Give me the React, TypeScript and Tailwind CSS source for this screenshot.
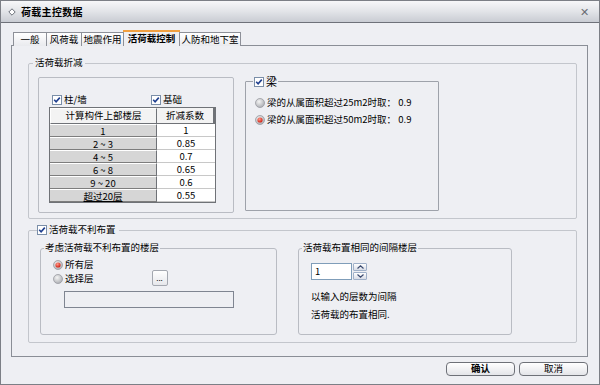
import React from "react";

const F = "font-['Noto_Sans_CJK_SC','Noto_Sans',sans-serif]";

function Check({ checked = true }: { checked?: boolean }) {
  return (
    <svg width="10" height="10" viewBox="0 0 10 10" className="shrink-0">
      <rect x="0.5" y="0.5" width="9" height="9" fill="#fff" stroke="#7a8ea8" />
      {checked && <path d="M2.2 4.8 L4.1 6.8 L7.8 2.6" fill="none" stroke="#1f3f8f" strokeWidth="1.6" />}
    </svg>
  );
}

function Radio({ checked = false }: { checked?: boolean }) {
  return (
    <svg width="10" height="10" viewBox="0 0 10 10" className="shrink-0">
      <defs>
        <radialGradient id="rg" cx="40%" cy="35%" r="70%">
          <stop offset="0%" stopColor="#f4f4f4" />
          <stop offset="100%" stopColor="#a9abb0" />
        </radialGradient>
        <radialGradient id="rr" cx="40%" cy="35%" r="60%">
          <stop offset="0%" stopColor="#ff9a8a" />
          <stop offset="100%" stopColor="#d42a1c" />
        </radialGradient>
      </defs>
      <circle cx="5" cy="5" r="4.5" fill="url(#rg)" stroke="#9a9ca2" strokeWidth="0.8" />
      {checked && <circle cx="5" cy="5" r="2.6" fill="url(#rr)" />}
    </svg>
  );
}

const rows: [string, string][] = [
  ["1", "1"],
  ["2 ~ 3", "0.85"],
  ["4 ~ 5", "0.7"],
  ["6 ~ 8", "0.65"],
  ["9 ~ 20", "0.6"],
  ["超过20层", "0.55"],
];

export default function App() {
  return (
    <div className={`${F} w-[600px] h-[385px] flex flex-col bg-[#eeeff3] border border-[#7c7f86] text-[9.5px] text-black overflow-hidden`}>
      {/* title bar */}
      <div className="h-[22px] shrink-0 flex items-center bg-gradient-to-b from-[#f7f7f9] via-[#e2e4e8] to-[#c9ccd3] border-b border-[#6e7179] pl-[7px] pr-[10px]">
        <svg width="8" height="8" viewBox="0 0 8 8" className="mr-[5px]">
          <path d="M4 0.8 L7.2 4 L4 7.2 L0.8 4 Z" fill="#fff" stroke="#6b6f78" strokeWidth="1" />
        </svg>
        <span className="font-bold text-[10px] leading-none tracking-[0.3px]">荷载主控数据</span>
        <span className="ml-auto text-[#6a6d74] text-[11px] leading-none">✕</span>
      </div>

      <div className="flex flex-col pl-[10px] pr-[11px] pt-[7px]">
        {/* tabs */}
        <div className="flex items-end h-[16px] pl-[2px] relative z-10">
          <div className="h-[14px] w-[34px] flex items-center justify-center border border-b-0 border-[#8d9098] bg-gradient-to-b from-[#ffffff] to-[#e9eaee] leading-none -mr-px">一般</div>
          <div className="h-[14px] w-[36px] flex items-center justify-center border border-b-0 border-[#8d9098] bg-gradient-to-b from-[#ffffff] to-[#e9eaee] leading-none -mr-px">风荷载</div>
          <div className="h-[14px] w-[43px] flex items-center justify-center border border-b-0 border-[#8d9098] bg-gradient-to-b from-[#ffffff] to-[#e9eaee] leading-none -mr-px">地震作用</div>
          <div className="h-[16px] w-[57px] flex flex-col border border-b-0 border-[#8d9098] bg-[#eeeff3] -mr-px">
            <div className="h-[2px] bg-[#f2a040] -mx-px -mt-px" />
            <div className="flex-1 flex items-center justify-center font-bold leading-none">活荷载控制</div>
          </div>
          <div className="h-[14px] w-[62px] flex items-center justify-center border border-b-0 border-[#8d9098] bg-gradient-to-b from-[#ffffff] to-[#e9eaee] leading-none">
            人防和地下室
          </div>
        </div>

        {/* panel */}
        <div className="h-[312px] -mt-px border border-[#8a8e96] bg-[#eeeff3] pl-[16px] pt-[17px] flex flex-col gap-[11px]">
          {/* group 1 */}
          <div className="relative w-[549px] h-[156px] border border-[#c3c6cc] rounded-[2px] flex items-start pl-[9px] pt-[13px]">
            <span className="absolute left-[4px] -top-[6px] px-[2px] bg-[#eeeff3] leading-none">活荷载折减</span>
            {/* inner table box */}
            <div className="w-[196px] h-[136px] border border-[#b9bcc3] rounded-[2px] flex flex-col pl-[10px] pt-[16px]">
              <div className="flex items-center h-[11px]">
                <div className="flex items-center gap-[2px] w-[102px] pl-[3px]">
                  <Check />
                  <span className="leading-none">柱/墙</span>
                </div>
                <div className="flex items-center gap-[2px]">
                  <Check />
                  <span className="leading-none">基础</span>
                </div>
              </div>
              <div className="mt-[2px] w-[167px] border border-[#6f7277] bg-white flex flex-col">
                <div className="flex h-[16px]">
                  <div className="w-[107px] flex items-center justify-center bg-[#f3f3f3] border-r border-b border-[#6f7277] border-t border-l border-t-white border-l-white leading-none">
                    计算构件上部楼层
                  </div>
                  <div className="flex-1 flex items-center justify-center bg-[#f3f3f3] border-b border-r-2 border-[#6f7277] leading-none">
                    折减系数
                  </div>
                </div>
                {rows.map(([a, b]) => (
                  <div key={a} className="flex h-[13px] overflow-hidden">
                    <div className="w-[107px] flex items-center justify-center bg-[#d6d6d6] border-t border-t-white border-b border-b-[#7d7d7d] border-r border-r-[#6f7277]">
                      <span className={`leading-[10px] whitespace-pre ${a === "超过20层" ? "underline" : ""}`}>{a}</span>
                    </div>
                    <div className="flex-1 flex items-center justify-center bg-white border-b border-[#c8c8c8]">
                      <span className="leading-[10px]">{b}</span>
                    </div>
                  </div>
                ))}
              </div>
            </div>
            {/* beam box */}
            <div className="relative ml-[11px] mt-[4px] w-[194px] h-[130px] border border-[#9ea2aa] rounded-[1px] flex flex-col pl-[9px] pt-[16px] gap-[7px]">
              <div className="absolute left-[7px] -top-[6px] px-[1px] bg-[#eeeff3] flex items-center gap-[2px]">
                <Check />
                <span className="leading-none text-[11px]">梁</span>
              </div>
              <div className="flex items-center gap-[2px] h-[10px]">
                <Radio />
                <span className="leading-none whitespace-pre">梁的从属面积超过25m2时取： 0.9</span>
              </div>
              <div className="flex items-center gap-[2px] h-[10px]">
                <Radio checked />
                <span className="leading-none whitespace-pre">梁的从属面积超过50m2时取： 0.9</span>
              </div>
            </div>
          </div>

          {/* group 2 */}
          <div className="relative w-[549px] h-[113px] border border-[#c3c6cc] rounded-[2px] flex items-start pl-[11px] pt-[17px]">
            <div className="absolute left-[8px] -top-[6px] pr-[3px] bg-[#eeeff3] flex items-center gap-[2px]">
              <Check />
              <span className="leading-none">活荷载不利布置</span>
            </div>
            <div className="relative w-[237px] h-[87px] border border-[#b9bcc3] rounded-[3px] flex flex-col pl-[12px] pt-[11px]">
              <span className="absolute left-[3px] -top-[6px] px-[1px] bg-[#eeeff3] leading-none">考虑活荷载不利布置的楼层</span>
              <div className="flex items-center gap-[2px] h-[10px]">
                <Radio checked />
                <span className="leading-none">所有层</span>
              </div>
              <div className="flex items-center h-[16px] mt-[1px]">
                <div className="flex items-center gap-[2px]">
                  <Radio />
                  <span className="leading-none">选择层</span>
                </div>
                <div className="ml-[58px] -mt-[3px] w-[16px] h-[16px] border border-[#a4a8b0] rounded-[2px] bg-gradient-to-b from-white to-[#e6e7eb] flex items-end justify-center pb-[3px] leading-none text-[8px]">
                  ...
                </div>
              </div>
              <div className="ml-[11px] mt-[4px] w-[170px] h-[17px] border border-[#7f8591] bg-[#eeeff3]" />
            </div>
            <div className="relative ml-[21px] w-[214px] h-[87px] border border-[#b9bcc3] rounded-[3px] flex flex-col pl-[12px] pt-[14px]">
              <span className="absolute left-[3px] -top-[6px] px-[1px] bg-[#eeeff3] leading-none">活荷载布置相同的间隔楼层</span>
              <div className="flex items-center">
                <div className="w-[41px] h-[17px] border border-[#7f9db9] bg-white flex items-center pl-[3px] leading-none">1</div>
                <div className="flex flex-col ml-px w-[14px] h-[17px]">
                  <div className="h-[8px] border border-[#9fb0c8] rounded-[1px] bg-gradient-to-b from-white to-[#d8dce6] flex items-center justify-center">
                    <svg width="7" height="4" viewBox="0 0 7 4"><path d="M0.5 3.5 L3.5 0.8 L6.5 3.5" fill="none" stroke="#3b4b70" strokeWidth="1.2" /></svg>
                  </div>
                  <div className="h-[8px] mt-px border border-[#9fb0c8] rounded-[1px] bg-gradient-to-b from-white to-[#d8dce6] flex items-center justify-center">
                    <svg width="7" height="4" viewBox="0 0 7 4"><path d="M0.5 0.5 L3.5 3.2 L6.5 0.5" fill="none" stroke="#3b4b70" strokeWidth="1.2" /></svg>
                  </div>
                </div>
              </div>
              <span className="mt-[12px] leading-none">以输入的层数为间隔</span>
              <span className="mt-[8px] leading-none">活荷载的布置相同.</span>
            </div>
          </div>
        </div>

        {/* footer */}
        <div className="flex justify-end gap-[4px] pt-[5px]">
          <div className="w-[69px] h-[14px] border border-[#6e7178] rounded-[4px] bg-gradient-to-b from-white to-[#e4e5e9] flex items-center justify-center font-bold leading-none">确认</div>
          <div className="w-[69px] h-[14px] border border-[#6e7178] rounded-[4px] bg-gradient-to-b from-white to-[#e4e5e9] flex items-center justify-center leading-none">取消</div>
        </div>
      </div>
    </div>
  );
}
